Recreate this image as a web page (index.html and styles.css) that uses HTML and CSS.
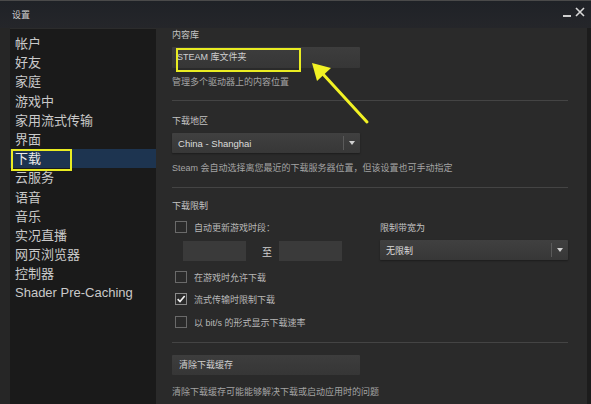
FILE: index.html
```html
<!DOCTYPE html>
<html lang="zh-CN">
<head>
    <meta charset="UTF-8">
    <meta name="viewport" content="width=device-width, initial-scale=1.0">
    <title>设置</title>
    <link rel="stylesheet" href="styles.css">
</head>
<body>

    <div class="window">
        <div class="titlebar">
            <span class="title">设置</span>
            <div class="win_btns">
                <span class="min"></span>
                <svg class="close" width="10" height="10" viewBox="0 0 10 10"><path d="M1 1L9 9M9 1L1 9" stroke="#d8d8d8" stroke-width="1.6"/></svg>
            </div>
        </div>

        <div class="main">
            <ul class="sidebar">
                <li>帐户</li>
                <li>好友</li>
                <li>家庭</li>
                <li>游戏中</li>
                <li>家用流式传输</li>
                <li>界面</li>
                <li class="on">下载</li>
                <li>云服务</li>
                <li>语音</li>
                <li>音乐</li>
                <li>实况直播</li>
                <li>网页浏览器</li>
                <li>控制器</li>
                <li class="latin">Shader Pre-Caching</li>
            </ul>

            <div class="content">
                <div class="label">内容库</div>
                <div class="btn btn_lib">STEAM 库文件夹</div>
                <div class="desc d1">管理多个驱动器上的内容位置</div>
                <div class="sep s1"></div>

                <div class="label l2">下载地区</div>
                <div class="select sel_region">
                    <span class="val latin">China - Shanghai</span>
                    <span class="arrow"></span>
                </div>
                <div class="desc d2">Steam 会自动选择离您最近的下载服务器位置，但该设置也可手动指定</div>
                <div class="sep s2"></div>

                <div class="label l3">下载限制</div>
                <div class="limit">
                    <div class="limit_left">
                        <div class="check c1"><span class="box"></span>自动更新游戏时段：</div>
                        <div class="times">
                            <span class="input"></span>
                            <span class="to">至</span>
                            <span class="input"></span>
                        </div>
                        <div class="check c2"><span class="box"></span>在游戏时允许下载</div>
                        <div class="check c3"><span class="box checked">
                            <svg width="12" height="12" viewBox="0 0 12 12"><path d="M2 6.2L4.8 9L10.4 2.4" fill="none" stroke="#f2f2f2" stroke-width="2"/></svg>
                        </span>流式传输时限制下载</div>
                        <div class="check c4"><span class="box"></span>以 bit/s 的形式显示下载速率</div>
                    </div>
                    <div class="limit_right">
                        <div class="label">限制带宽为</div>
                        <div class="select sel_bw">
                            <span class="val">无限制</span>
                            <span class="arrow"></span>
                        </div>
                    </div>
                </div>
                <div class="sep s3"></div>

                <div class="btn btn_clear">清除下载缓存</div>
                <div class="desc d3">清除下载缓存可能能够解决下载或启动应用时的问题</div>
            </div>
            <div class="edge"></div>
        </div>

        <!-- 标注 -->
        <div class="mark mark_nav"></div>
        <div class="mark mark_lib"></div>
        <svg class="pointer" width="591" height="404" viewBox="0 0 591 404">
            <path d="M367 121L322 72" stroke="#f2f224" stroke-width="3" stroke-linecap="round"/>
            <path d="M312 62L331 67L317 80Z" fill="#f2f224"/>
        </svg>
    </div>

</body>
</html>
```

FILE: styles.css
```css
*{margin:0;padding:0;box-sizing:border-box;}
body{background:#1e1e1e;font-family:"Liberation Sans","Noto Sans CJK SC",sans-serif;}
ul{list-style:none;}
.latin{font-family:"Liberation Sans",Arial,sans-serif;}

.window{position:relative;width:591px;height:404px;overflow:hidden;background:#262626;border-top:1px solid #4a4a4a;}

.titlebar{height:27px;display:flex;align-items:center;justify-content:space-between;padding:0 6px 0 12px;background:linear-gradient(#1f2227,#25262a);}
.titlebar .title{font-size:9px;color:#cfcfcf;margin-top:-1px;}
.win_btns{display:flex;align-items:center;gap:4px;margin-top:-5px;}
.win_btns .min{width:8px;height:2px;background:#cfcfcf;margin-top:7px;}

.main{display:flex;height:376px;padding-left:10px;}

.sidebar{width:147px;background:#1a1a1a;padding-top:5px;border-top:1px solid #2c2c2c;}
.sidebar li{height:19.2px;line-height:19.2px;padding-left:5px;font-size:13px;color:#c9c9c9;white-space:nowrap;}
.sidebar li.on{background:#1d3450;color:#eaeaea;}

.content{flex:1;background:#2a2a2a;padding:1px 19px 0 16px;font-size:9px;color:#bdbdbd;}
.edge{width:4px;background:#1c1c1c;}

.label{height:12px;line-height:12px;color:#c4c4c4;}
.desc{height:12px;line-height:12px;color:#a4a4a4;white-space:nowrap;}
.sep{height:1px;background:#444;}

.btn{width:188px;height:21px;line-height:21px;padding-left:7px;background:linear-gradient(#3d3d3d,#363636);color:#d0d0d0;border-radius:1px;}
.btn_lib{margin-top:6px;padding-left:5px;}
.d1{margin-top:8px;}
.s1{margin-top:12px;}

.l2{margin-top:14px;}
.select{display:flex;align-items:center;width:188px;height:20px;background:linear-gradient(#404040,#373737);border-radius:1px;box-shadow:0 1px 2px rgba(0,0,0,.35);}
.select .val{flex:1;padding-left:6px;color:#dcdcdc;}
.select .arrow{width:17px;height:14px;border-left:1px solid #5a5a5a;position:relative;}
.select .arrow:after{content:"";position:absolute;left:5px;top:5px;border-left:3px solid transparent;border-right:3px solid transparent;border-top:4px solid #d0d0d0;}
.sel_region{margin-top:6px;}
.sel_region .val{font-size:9.5px;}
.d2{margin-top:9px;}
.s2{margin-top:13px;}

.l3{margin-top:12px;}
.limit{display:flex;}
.limit_left{width:208px;}
.check{display:flex;align-items:center;height:14px;color:#b8b8b8;}
.check .box{width:12px;height:12px;border:1px solid #6a6a6a;margin:0 7px 0 3px;display:flex;align-items:center;justify-content:center;}
.check .box.checked{border-color:#8a8a8a;}
.c1{margin-top:8px;}
.times{display:flex;align-items:center;margin-top:7px;padding-left:11px;}
.times .input{width:63px;height:20px;background:#3a3a3a;}
.times .to{width:33px;padding-left:16px;color:#cfcfcf;font-size:10px;}
.c2{margin-top:9px;}
.c3{margin-top:8px;}
.c4{margin-top:9px;}

.limit_right{padding-top:9px;}
.limit_right .label{height:14px;line-height:14px;}
.sel_bw{margin-top:5px;}

.s3{margin-top:13px;}
.btn_clear{margin-top:12px;height:20px;line-height:20px;}
.d3{margin-top:11px;}

.mark{position:absolute;border:2px solid #e9ec22;}
.mark_nav{left:11px;top:148px;width:61px;height:22px;}
.mark_lib{left:176px;top:47px;width:125px;height:24px;}
.pointer{position:absolute;left:0;top:0;}
```
